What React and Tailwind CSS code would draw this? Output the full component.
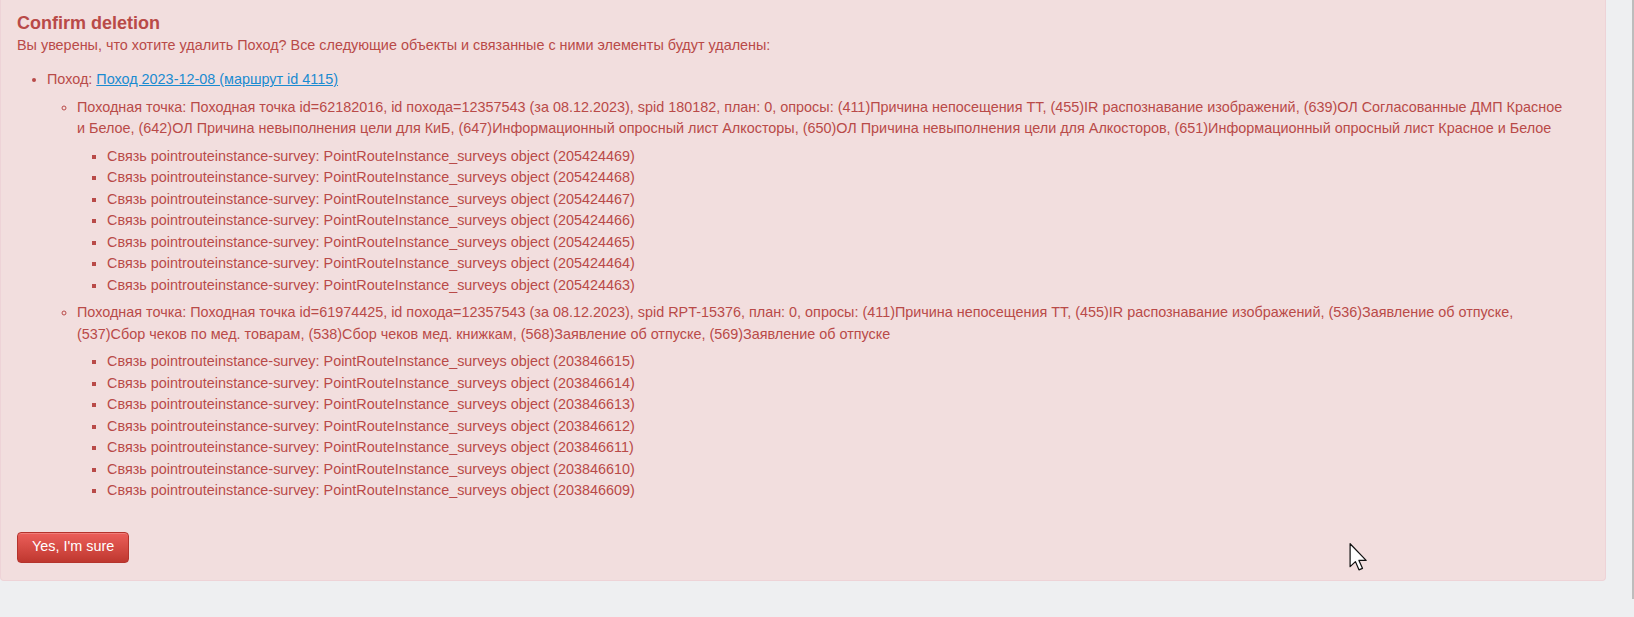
import React from 'react';

const points = [
  {
    text: 'Походная точка: Походная точка id=62182016, id похода=12357543 (за 08.12.2023), spid 180182, план: 0, опросы: (411)Причина непосещения ТТ, (455)IR распознавание изображений, (639)ОЛ Согласованные ДМП Красное и Белое, (642)ОЛ Причина невыполнения цели для КиБ, (647)Информационный опросный лист Алкосторы, (650)ОЛ Причина невыполнения цели для Алкосторов, (651)Информационный опросный лист Красное и Белое',
    surveys: ['205424469', '205424468', '205424467', '205424466', '205424465', '205424464', '205424463'],
  },
  {
    text: 'Походная точка: Походная точка id=61974425, id похода=12357543 (за 08.12.2023), spid RPT-15376, план: 0, опросы: (411)Причина непосещения ТТ, (455)IR распознавание изображений, (536)Заявление об отпуске, (537)Сбор чеков по мед. товарам, (538)Сбор чеков мед. книжкам, (568)Заявление об отпуске, (569)Заявление об отпуске',
    surveys: ['203846615', '203846614', '203846613', '203846612', '203846611', '203846610', '203846609'],
  },
];

const Cursor = () => (
  <svg className="absolute left-[1349px] top-[543px]" width="19" height="29" viewBox="0 0 12 19">
    <path d="M0.5 0.5 L0.5 15.5 L4 12.2 L6.3 17.6 L8.6 16.6 L6.3 11.4 L11 11.4 Z" fill="#fff" stroke="#111" strokeWidth="0.8" strokeLinejoin="round" />
  </svg>
);

const App = () => {
  return (
    <div className="relative min-h-[617px] bg-[#eeeff1] pr-[28px] font-['Liberation_Sans',Arial,sans-serif] text-[14.4px] leading-[21.5px] text-[#b94a48]">
      <section className="rounded-b-[4px] border-x border-b border-[#eed3d7] bg-[#f2dede] pt-[11px] pb-[17px] pl-[16px] pr-[35px]">
        <h1 className="text-[18px] font-bold leading-[24px]">Confirm deletion</h1>
        <p>Вы уверены, что хотите удалить Поход? Все следующие объекты и связанные с ними элементы будут удалены:</p>

        <ul className="mt-[12.5px] list-disc pl-[30px]">
          <li>
            Поход:{' '}
            <a href="#" className="text-[#1a8bd1] underline">Поход 2023-12-08 (маршрут id 4115)</a>
            <ul className="my-[6px] list-[circle] pl-[30px]">
              {points.map((point, i) => (
                <li key={i}>
                  {point.text}
                  <ul className="my-[6px] list-[square] pl-[30px]">
                    {point.surveys.map(id => (
                      <li key={id}>Связь pointrouteinstance-survey: PointRouteInstance_surveys object ({id})</li>
                    ))}
                  </ul>
                </li>
              ))}
            </ul>
          </li>
        </ul>

        <button className="mt-[24px] h-[31px] rounded-[4px] border border-[#b5332c] bg-gradient-to-b from-[#ec5f5a] to-[#bf372f] px-[14px] text-[14.4px] text-white shadow-[inset_0_1px_0_rgba(255,255,255,0.2)]">
          Yes, I'm sure
        </button>
      </section>

      <div className="absolute right-0 top-0 h-[599px] w-[2px] bg-[#bdbdbd]" />
      <Cursor />
    </div>
  );
};

export default App;
